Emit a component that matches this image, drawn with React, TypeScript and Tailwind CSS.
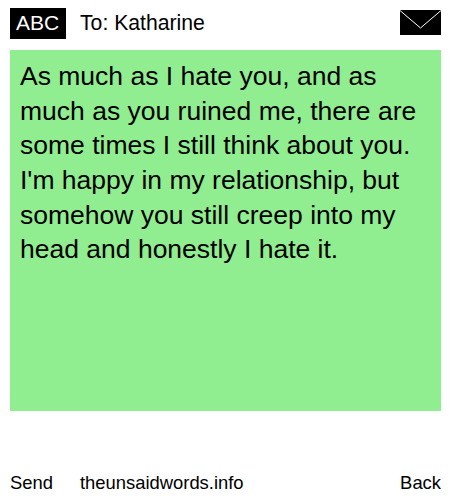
export default function App() {
  return (
    <div className="w-[450px] h-[500px] bg-white text-black flex flex-col font-['Liberation_Sans',Arial,sans-serif]">
      {/* Header */}
      <div className="h-[50px] pl-[10px] pr-[9px] pt-2 flex items-start">
        <div className="w-14 h-[31px] pr-[1px] bg-black text-white text-[21px] leading-[29px] text-center">ABC</div>
        <div className="ml-[14px] text-[21.2px] leading-[29px]">To: Katharine</div>
        <svg className="ml-auto mt-[2px]" width="41" height="25" viewBox="0 0 41 25">
          <rect width="41" height="25" fill="#000" />
          <path d="M0 0.5L20.5 18L41 0.5" fill="none" stroke="#fff" strokeWidth="1" />
        </svg>
      </div>

      {/* Message */}
      <div className="ml-[10px] mr-[9px] h-[361px] bg-[#90ee90] px-[10px] pt-[9px] text-[26.5px] leading-[34.67px]">
        As much as I hate you, and as much as you ruined me, there are some times I still think about you. I'm happy in my relationship, but somehow you still creep into my head and honestly I hate it.
      </div>

      {/* Footer */}
      <div className="mt-auto h-[29px] pl-[10px] pr-[9px] flex items-start text-[18.4px] leading-[24px]">
        <span className="w-[70px]">Send</span>
        <span>theunsaidwords.info</span>
        <span className="ml-auto">Back</span>
      </div>
    </div>
  );
}
